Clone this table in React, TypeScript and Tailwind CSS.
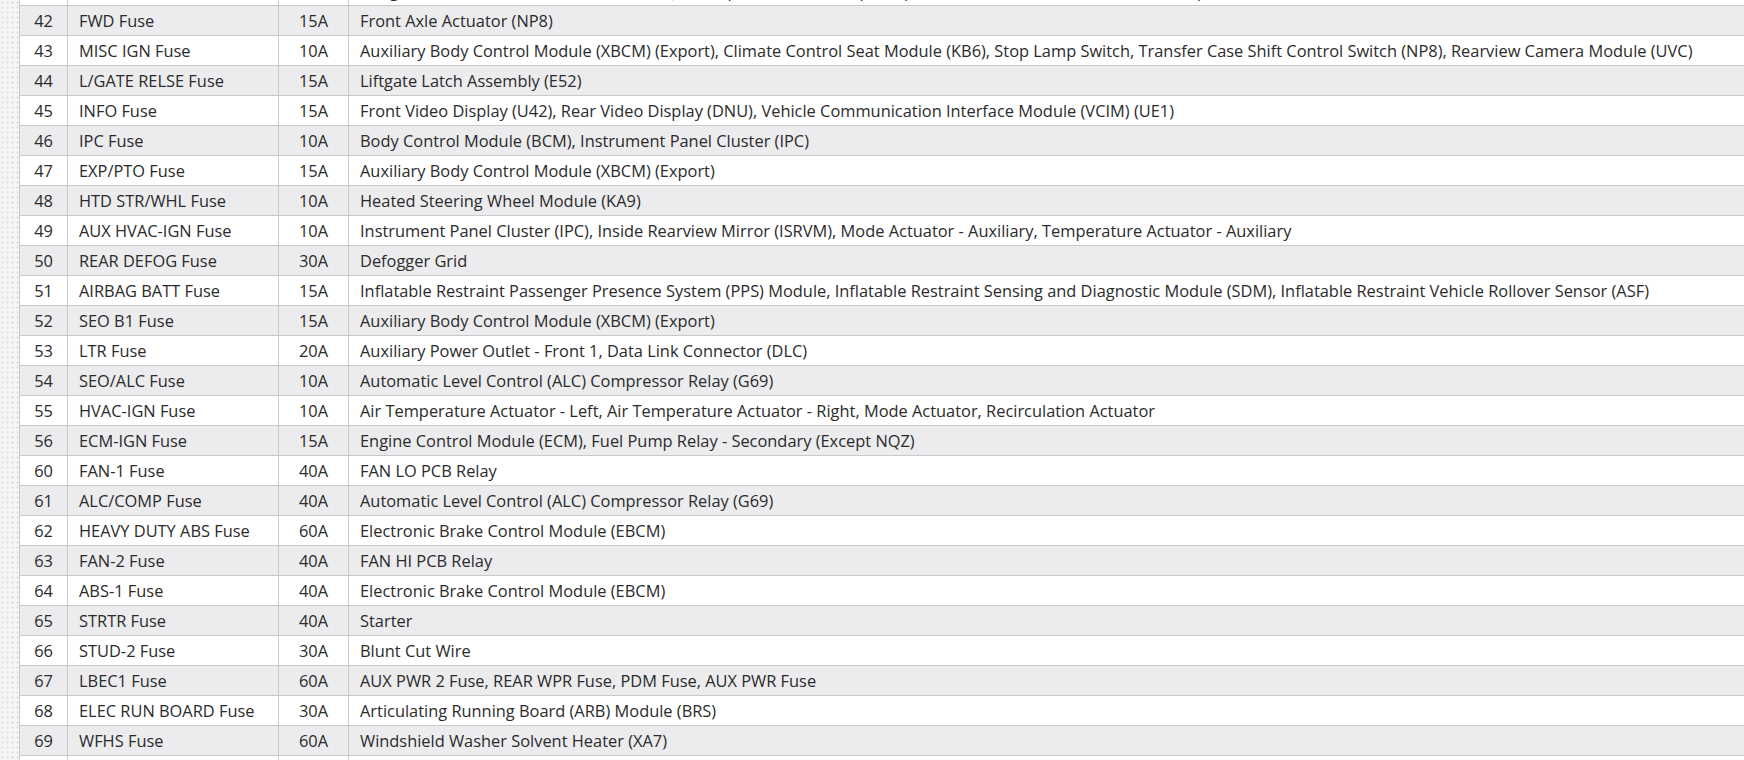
import React from "react";

type Fuse = { n: number; name: string; amp: string; desc: string };

const FUSES: Fuse[] = [
  { n: 42, name: "FWD Fuse", amp: "15A", desc: "Front Axle Actuator (NP8)" },
  { n: 43, name: "MISC IGN Fuse", amp: "10A", desc: "Auxiliary Body Control Module (XBCM) (Export), Climate Control Seat Module (KB6), Stop Lamp Switch, Transfer Case Shift Control Switch (NP8), Rearview Camera Module (UVC)" },
  { n: 44, name: "L/GATE RELSE Fuse", amp: "15A", desc: "Liftgate Latch Assembly (E52)" },
  { n: 45, name: "INFO Fuse", amp: "15A", desc: "Front Video Display (U42), Rear Video Display (DNU), Vehicle Communication Interface Module (VCIM) (UE1)" },
  { n: 46, name: "IPC Fuse", amp: "10A", desc: "Body Control Module (BCM), Instrument Panel Cluster (IPC)" },
  { n: 47, name: "EXP/PTO Fuse", amp: "15A", desc: "Auxiliary Body Control Module (XBCM) (Export)" },
  { n: 48, name: "HTD STR/WHL Fuse", amp: "10A", desc: "Heated Steering Wheel Module (KA9)" },
  { n: 49, name: "AUX HVAC-IGN Fuse", amp: "10A", desc: "Instrument Panel Cluster (IPC), Inside Rearview Mirror (ISRVM), Mode Actuator - Auxiliary, Temperature Actuator - Auxiliary" },
  { n: 50, name: "REAR DEFOG Fuse", amp: "30A", desc: "Defogger Grid" },
  { n: 51, name: "AIRBAG BATT Fuse", amp: "15A", desc: "Inflatable Restraint Passenger Presence System (PPS) Module, Inflatable Restraint Sensing and Diagnostic Module (SDM), Inflatable Restraint Vehicle Rollover Sensor (ASF)" },
  { n: 52, name: "SEO B1 Fuse", amp: "15A", desc: "Auxiliary Body Control Module (XBCM) (Export)" },
  { n: 53, name: "LTR Fuse", amp: "20A", desc: "Auxiliary Power Outlet - Front 1, Data Link Connector (DLC)" },
  { n: 54, name: "SEO/ALC Fuse", amp: "10A", desc: "Automatic Level Control (ALC) Compressor Relay (G69)" },
  { n: 55, name: "HVAC-IGN Fuse", amp: "10A", desc: "Air Temperature Actuator - Left, Air Temperature Actuator - Right, Mode Actuator, Recirculation Actuator" },
  { n: 56, name: "ECM-IGN Fuse", amp: "15A", desc: "Engine Control Module (ECM), Fuel Pump Relay - Secondary (Except NQZ)" },
  { n: 60, name: "FAN-1 Fuse", amp: "40A", desc: "FAN LO PCB Relay" },
  { n: 61, name: "ALC/COMP Fuse", amp: "40A", desc: "Automatic Level Control (ALC) Compressor Relay (G69)" },
  { n: 62, name: "HEAVY DUTY ABS Fuse", amp: "60A", desc: "Electronic Brake Control Module (EBCM)" },
  { n: 63, name: "FAN-2 Fuse", amp: "40A", desc: "FAN HI PCB Relay" },
  { n: 64, name: "ABS-1 Fuse", amp: "40A", desc: "Electronic Brake Control Module (EBCM)" },
  { n: 65, name: "STRTR Fuse", amp: "40A", desc: "Starter" },
  { n: 66, name: "STUD-2 Fuse", amp: "30A", desc: "Blunt Cut Wire" },
  { n: 67, name: "LBEC1 Fuse", amp: "60A", desc: "AUX PWR 2 Fuse, REAR WPR Fuse, PDM Fuse, AUX PWR Fuse" },
  { n: 68, name: "ELEC RUN BOARD Fuse", amp: "30A", desc: "Articulating Running Board (ARB) Module (BRS)" },
  { n: 69, name: "WFHS Fuse", amp: "60A", desc: "Windshield Washer Solvent Heater (XA7)" },
  { n: 70, name: "ACCY BATT Fuse", amp: "30A", desc: "Accessory Power" },
];

const CELDA = "border-l border-[#c9c9c9]";

export default function App() {
  return (
    <div className="flex h-[760px] w-[1744px] overflow-hidden bg-white text-[16.4px] text-[#2b2b2b] [font-family:'Open_Sans',sans-serif]">
      {/* franja con textura a la izquierda */}
      <div className="w-[19px] shrink-0 bg-[#f6f6f6] bg-[radial-gradient(circle,#e6e6e6_1px,transparent_1.6px)] bg-[length:5px_5px]" />

      <div className="-mt-[54px] min-w-0 flex-1">
        {/* fila anterior (scroll): solo asoman los rabos de la última línea */}
        <div className="grid h-[59px] grid-cols-[48px_211px_70px_1fr] border-t border-[#c9c9c9] bg-white leading-[29px]">
          <div className={CELDA} />
          <div className={CELDA} />
          <div className={CELDA} />
          <div className={`${CELDA} pl-[11px] whitespace-nowrap`}>
            <div>Steering Column Lock (Export), Trailer Brake Module (JL1), Trailer Interface Module (UQA)</div>
            <div>Integrated Trailer Brake Control Module (JL1) (Export), Trailer Lamps (Export) (UY7), Trailer Provisions (UY2) (Export)</div>
          </div>
        </div>

        {FUSES.map((f, i) => {
          // filas alternas: 42 gris, 43 blanca...
          const gris = i % 2 === 0;
          return (
            <div
              key={f.n}
              className={`grid h-[30px] grid-cols-[48px_211px_70px_1fr] border-t border-[#c9c9c9] leading-[29px] ${gris ? "bg-[#ececee]" : "bg-white"}`}
            >
              <div className={`${CELDA} text-center`}>{f.n}</div>
              <div className={`${CELDA} pl-[11px] whitespace-nowrap`}>{f.name}</div>
              <div className={`${CELDA} text-center`}>{f.amp}</div>
              <div className={`${CELDA} pl-[11px] whitespace-nowrap`}>{f.desc}</div>
            </div>
          );
        })}
      </div>
    </div>
  );
}
